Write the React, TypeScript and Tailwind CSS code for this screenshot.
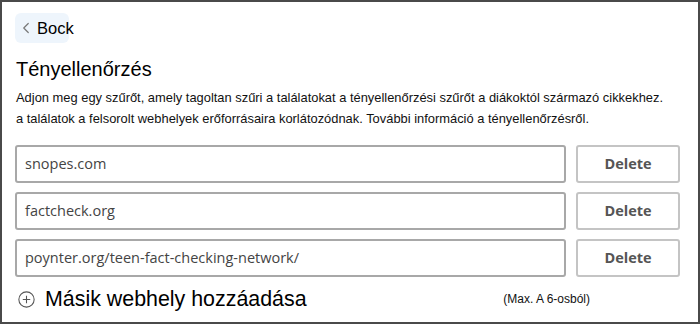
import { ChevronLeft } from "lucide-react";

const sites = ["snopes.com", "factcheck.org", "poynter.org/teen-fact-checking-network/"];

export default function App() {
  return (
    <div className="w-[700px] h-[324px] bg-white border-2 border-[#4a4a4a] font-['Liberation_Sans',Arial,sans-serif] text-black overflow-hidden">
      <div className="pl-[13px] pt-[11px] pr-[18px]">
        {/* vissza gomb */}
        <button className="flex items-center h-[30px] w-[54px] rounded-md bg-[#eef5fc] pl-[2px] overflow-visible whitespace-nowrap">
          <ChevronLeft className="w-[18px] h-[18px] text-[#777] shrink-0" strokeWidth={1.6} />
          <span className="ml-[2px] text-[16.5px] leading-none">Bock</span>
        </button>

        <h1 className="mt-[14px] ml-[1px] text-[20px] leading-[24px]">Tényellenőrzés</h1>
        <p className="mt-[6px] ml-[1px] text-[12.9px] leading-[21px] text-[#111] whitespace-nowrap">
          Adjon meg egy szűrőt, amely tagoltan szűri a találatokat a tényellenőrzési szűrőt a diákoktól származó cikkekhez.
          <br />
          a találatok a felsorolt webhelyek erőforrásaira korlátozódnak. További információ a tényellenőrzésről.
        </p>

        <div className="mt-[16px] flex flex-col gap-[9px]">
          {sites.map((s) => (
            <div key={s} className="flex gap-[10px]">
              <div className="w-[551px] h-[38px] border-2 border-[#a8a8a8] rounded-[3px] flex items-center px-[8px] font-['Open_Sans',sans-serif] text-[14.5px] text-[#444]">
                {s}
              </div>
              <button className="w-[104px] h-[38px] border-2 border-[#c4c4c4] rounded-[3px] font-['Open_Sans',sans-serif] font-bold text-[14.5px] text-[#555]">
                Delete
              </button>
            </div>
          ))}
        </div>

        <div className="mt-[8px] flex items-center">
          <svg width="17" height="17" viewBox="0 0 16 16" className="ml-[3px] text-[#555]" fill="none" stroke="currentColor" strokeWidth="1">
            <circle cx="8" cy="8" r="7.2" />
            <path d="M8 4.5v7M4.5 8h7" />
          </svg>
          <span className="ml-[10px] text-[21.4px] leading-[28px]">Másik webhely hozzáadása</span>
          <span className="ml-auto mr-[90px] text-[12px] text-[#111]">(Max. A 6-osból)</span>
        </div>
      </div>
    </div>
  );
}
